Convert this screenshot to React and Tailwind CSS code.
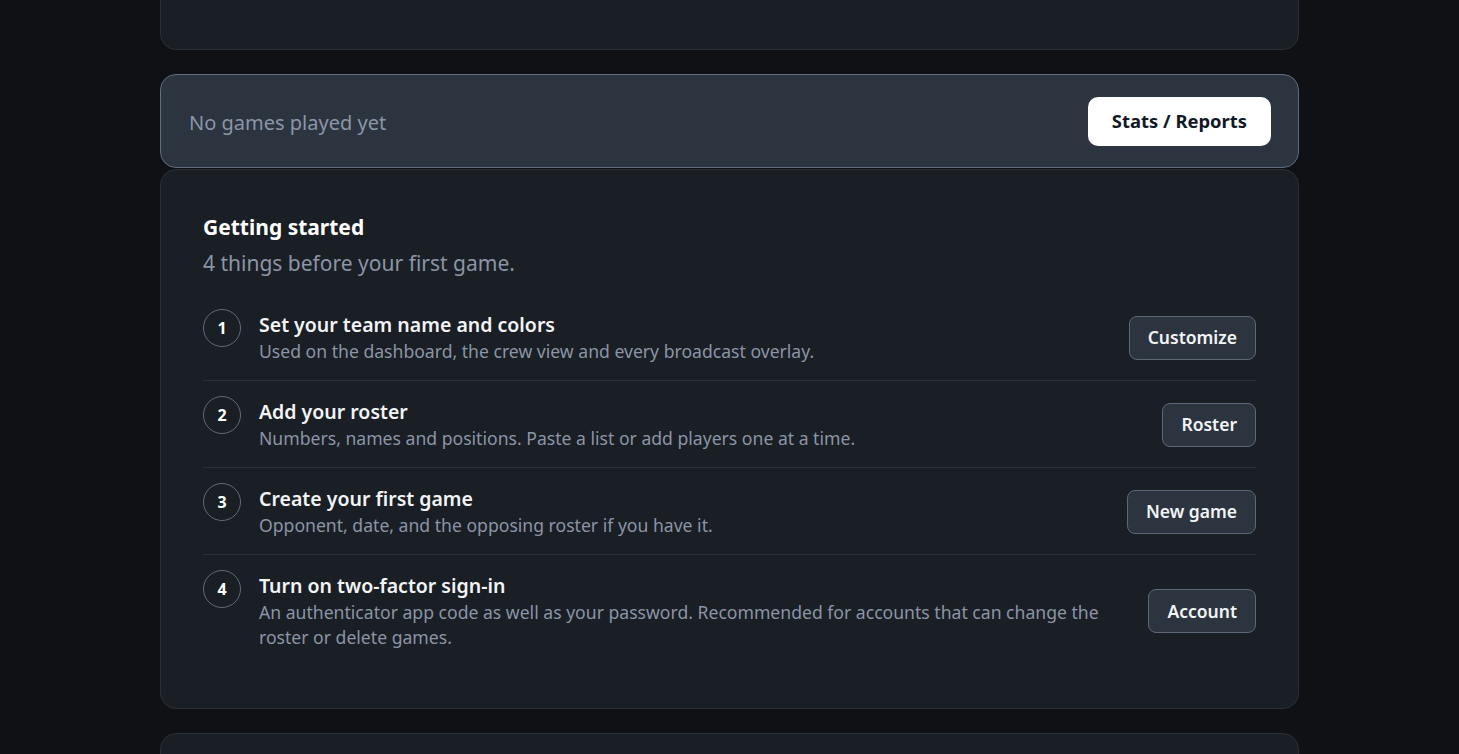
import React from 'react';

const STEPS = [
  {
    n: 1,
    title: 'Set your team name and colors',
    desc: 'Used on the dashboard, the crew view and every broadcast overlay.',
    action: 'Customize',
  },
  {
    n: 2,
    title: 'Add your roster',
    desc: 'Numbers, names and positions. Paste a list or add players one at a time.',
    action: 'Roster',
  },
  {
    n: 3,
    title: 'Create your first game',
    desc: 'Opponent, date, and the opposing roster if you have it.',
    action: 'New game',
  },
  {
    n: 4,
    title: 'Turn on two-factor sign-in',
    desc: 'An authenticator app code as well as your password. Recommended for accounts that can change the roster or delete games.',
    action: 'Account',
  },
];

const StepRow = ({ step, last }) => (
  <li className={`flex items-center gap-6 pb-4 pt-[17px] ${last ? '' : 'border-b border-[#2a2f37]'}`}>
    <div className="flex flex-1 items-start gap-[18px]">
      <span className="mt-[-2px] flex h-[38px] w-[38px] shrink-0 items-center justify-center rounded-full border border-[#626b78] text-[16px] font-bold text-white">
        {step.n}
      </span>
      <div className="max-w-[850px] flex-1">
        <div className="text-[19.5px] font-semibold leading-[28px] text-[#f3f4f6]">{step.title}</div>
        <div className="text-[17.6px] leading-[25px] text-[#8b95a5]">{step.desc}</div>
      </div>
    </div>
    <button className="h-[44px] shrink-0 rounded-lg border border-[#5d6877] bg-[#2c3440] px-[18px] text-[17.5px] font-semibold text-[#f3f4f6]">
      {step.action}
    </button>
  </li>
);

export default function App() {
  return (
    <div className="min-h-screen overflow-hidden bg-[#0f1115] font-['Noto_Sans',sans-serif]">
      <div className="mx-auto mt-[-59px] flex w-[1139px] flex-col">
        <div className="h-[109px] rounded-2xl border border-[#2a2f38] bg-[#1a1e25]" />

        <div className="mt-6 flex h-[94px] items-center justify-between rounded-2xl border border-[#5f6d7e] bg-[#2c3440] pl-7 pr-[27px]">
          <span className="pt-1 text-[20px] text-[#8a96a6]">No games played yet</span>
          <button className="h-[49px] rounded-[10px] bg-white px-6 text-[18.4px] font-bold text-[#111827]">
            Stats / Reports
          </button>
        </div>

        <div className="mt-px rounded-2xl border border-[#2a2f38] bg-[#1a1e25] px-[42px] pb-[42px] pt-[43px]">
          <h2 className="text-[21px] font-bold leading-[28px] text-white">Getting started</h2>
          <p className="mt-2 text-[21px] leading-[28px] text-[#8b95a5]">4 things before your first game.</p>
          <ul className="mt-[17px]">
            {STEPS.map((s, i) => (
              <StepRow key={s.n} step={s} last={i === STEPS.length - 1} />
            ))}
          </ul>
        </div>

        <div className="mt-6 h-[80px] rounded-2xl border border-[#2a2f38] bg-[#1a1e25]" />
      </div>
    </div>
  );
}
